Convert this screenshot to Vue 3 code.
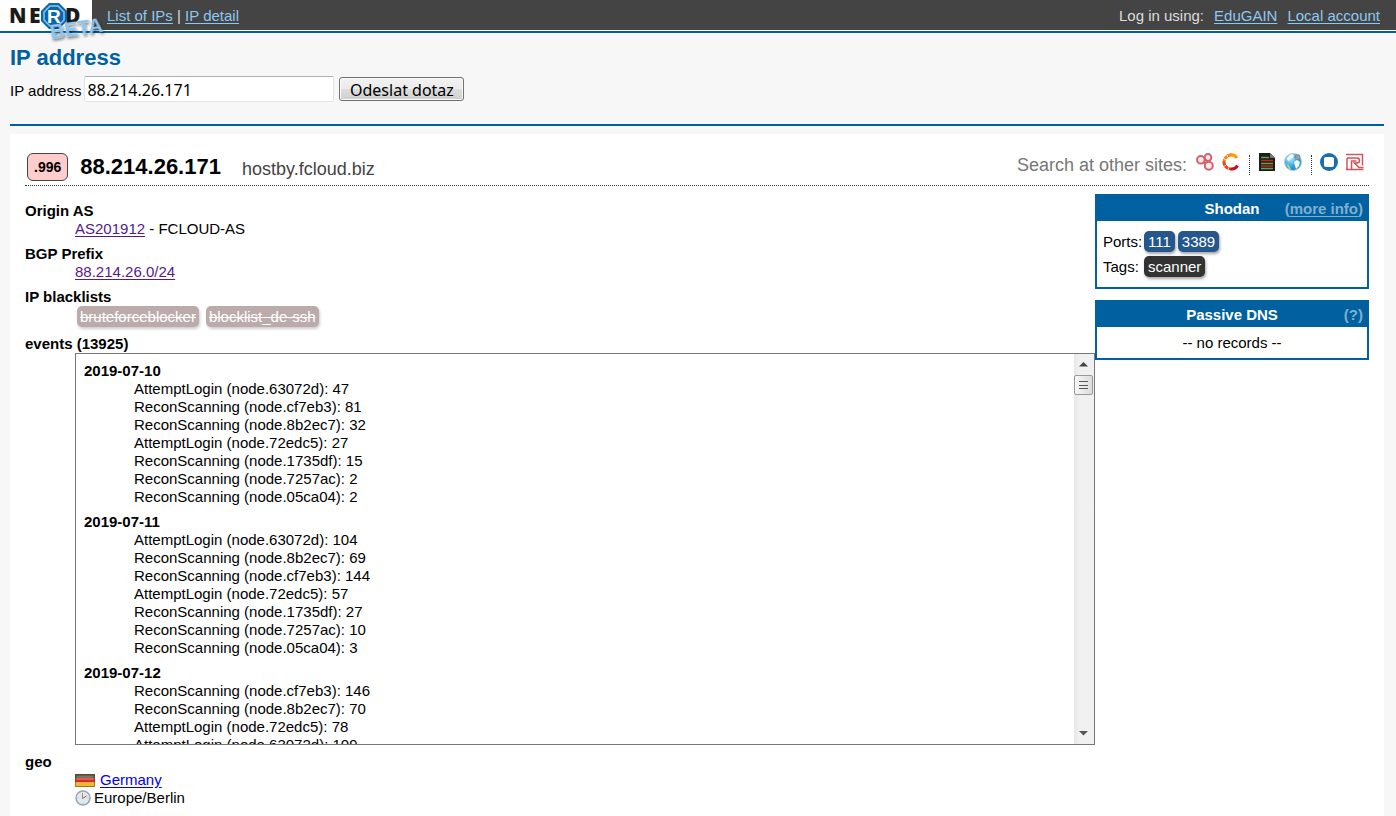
<script setup>
import { ref } from 'vue'

const address = ref('88.214.26.171')

const blacklists = ['bruteforceblocker', 'blocklist_de-ssh']
const ports = [111, 3389]

const days = [
  {
    date: '2019-07-10',
    events: [
      'AttemptLogin (node.63072d): 47',
      'ReconScanning (node.cf7eb3): 81',
      'ReconScanning (node.8b2ec7): 32',
      'AttemptLogin (node.72edc5): 27',
      'ReconScanning (node.1735df): 15',
      'ReconScanning (node.7257ac): 2',
      'ReconScanning (node.05ca04): 2',
    ],
  },
  {
    date: '2019-07-11',
    events: [
      'AttemptLogin (node.63072d): 104',
      'ReconScanning (node.8b2ec7): 69',
      'ReconScanning (node.cf7eb3): 144',
      'AttemptLogin (node.72edc5): 57',
      'ReconScanning (node.1735df): 27',
      'ReconScanning (node.7257ac): 10',
      'ReconScanning (node.05ca04): 3',
    ],
  },
  {
    date: '2019-07-12',
    events: [
      'ReconScanning (node.cf7eb3): 146',
      'ReconScanning (node.8b2ec7): 70',
      'AttemptLogin (node.72edc5): 78',
      'AttemptLogin (node.63072d): 109',
    ],
  },
]
</script>

<template>
  <div class="page">
    <header class="topbar">
      <a class="logo" href="#" aria-label="NERD beta">
        <svg width="108" height="48" viewBox="0 0 108 48">
          <defs>
            <filter id="soft" x="-20%" y="-40%" width="150%" height="200%">
              <feDropShadow dx="1" dy="2" stdDeviation="1.5" flood-color="#000" flood-opacity="0.6" />
            </filter>
          </defs>
          <g class="logo-word">
            <text x="9" y="23">N</text>
            <text x="29" y="23">E</text>
            <text x="65" y="23">D</text>
          </g>
          <path d="M49 3h10l8 8v10l-8 8H49l-8-8V11z" fill="#0b67ac" />
          <path d="M50 6h8l6 6v8l-6 6h-8l-6-6v-8z" fill="none" stroke="#8cc4ea" stroke-width="1.5" />
          <text class="logo-r" x="47" y="23">R</text>
          <text class="logo-beta" x="51" y="39" transform="rotate(-8 51 39)" filter="url(#soft)">BETA</text>
        </svg>
      </a>
      <nav class="menu"><a href="#">List of IPs</a> | <a href="#">IP detail</a></nav>
      <div class="login">
        <span>Log in using:</span>
        <a href="#">EduGAIN</a>
        <a href="#">Local account</a>
      </div>
    </header>

    <section class="query">
      <h1>IP address</h1>
      <form @submit.prevent>
        <label for="ip">IP address</label>
        <input id="ip" v-model="address" type="text" />
        <button type="submit">Odeslat dotaz</button>
      </form>
    </section>

    <main class="panel">
      <div class="title">
        <span class="score">.996</span>
        <h2>88.214.26.171</h2>
        <span class="host">hostby.fcloud.biz</span>
        <div class="sites">
          <span class="sites-label">Search at other sites:</span>
          <a href="#" aria-label="Site 1">
            <svg width="18" height="18" viewBox="0 0 18 18" fill="#fbeaec" stroke="#d4606b" stroke-width="2">
              <circle cx="12" cy="4.500" r="3.400" />
              <circle cx="4.800" cy="6.800" r="3.800" />
              <circle cx="12.800" cy="12.800" r="4" />
              <path d="M7.500 9.500l2.500 1.500M9 6l2 3" />
            </svg>
          </a>
          <a href="#" aria-label="Site 2">
            <svg width="18" height="18" viewBox="0 0 18 18" fill="none" stroke-width="3">
              <path d="M15 5A7 7 0 0 0 8 2" stroke="#ff9a00" />
              <path d="M9 2A7 7 0 0 0 2 9" stroke="#ff8010" stroke-dasharray="3.500 .6" />
              <path d="M2 8.500A7 7 0 0 0 9 16" stroke="#f0401c" stroke-dasharray="4 .6" />
              <path d="M8.500 16A7 7 0 0 0 15.500 12.500" stroke="#c8101c" />
            </svg>
          </a>
          <span class="divider"></span>
          <a href="#" aria-label="Site 3">
            <svg width="18" height="18" viewBox="0 0 18 18">
              <path d="M1 0h11l5 5v13H1z" fill="#1c1c1c" />
              <path d="M12 0v5h5z" fill="#777" />
              <path d="M3 4.500h8M3 10.500h12M3 15.500h12" stroke="#4cae4f" stroke-width="1.300" />
              <path d="M3 7.500h12M3 13h12" stroke="#e01818" stroke-width="1.300" />
            </svg>
          </a>
          <a href="#" aria-label="Site 4">
            <svg width="18" height="18" viewBox="0 0 18 18">
              <defs>
                <radialGradient id="globe" cx=".35" cy=".3" r=".8">
                  <stop offset="0" stop-color="#c6ecfb" />
                  <stop offset=".5" stop-color="#3fabe4" />
                  <stop offset="1" stop-color="#1673b8" />
                </radialGradient>
              </defs>
              <circle cx="9" cy="9" r="8.500" fill="url(#globe)" stroke="#a4cfe0" />
              <path d="M3 5l4-4 3 1-1 3-3 1-1 2-2-1zM10 9l3-2 3 2-1 4-3 3-1-3z" fill="#effaf4" />
              <path d="M2 11l3 1 2 4-2 0z" fill="#a3d79c" />
              <circle cx="13.500" cy="4" r="2.500" fill="#8fa1aa" stroke="#7b8c95" />
            </svg>
          </a>
          <span class="divider"></span>
          <a href="#" aria-label="Site 5">
            <svg width="18" height="18" viewBox="0 0 18 18">
              <circle cx="9" cy="9" r="9" fill="#1c6cb0" />
              <rect x="4" y="4" width="10" height="10" rx="2" fill="#fff" />
            </svg>
          </a>
          <a href="#" aria-label="Site 6">
            <svg width="18" height="18" viewBox="0 0 18 18" fill="none" stroke="#d4545e" stroke-width="1.500">
              <path d="M0 1.500h16.500v11M0 16.500h5.500V8h5M1 16V5" />
              <path d="M1 5h10q2.500 0 2.500 2.500T11 10H8.500l4.500 4.500h4.500M5.500 16.500h12" />
            </svg>
          </a>
        </div>
      </div>

      <div class="columns">
        <dl class="facts">
          <dt>Origin AS</dt>
          <dd><a class="visited" href="#">AS201912</a> - FCLOUD-AS</dd>
          <dt>BGP Prefix</dt>
          <dd><a class="visited" href="#">88.214.26.0/24</a></dd>
          <dt>IP blacklists</dt>
          <dd class="lists">
            <span v-for="name in blacklists" :key="name" class="tag old">{{ name }}</span>
          </dd>
          <dt>events (13925)</dt>
          <dd class="events">
            <div class="log">
              <dl v-for="day in days" :key="day.date">
                <dt>{{ day.date }}</dt>
                <dd v-for="line in day.events" :key="line">{{ line }}</dd>
              </dl>
            </div>
            <div class="scrollbar" aria-hidden="true">
              <svg width="19" height="20" viewBox="0 0 19 20"><path d="M5 12.500h9l-4.500-4.500z" fill="#444" /></svg>
              <span class="thumb"><i></i><i></i><i></i></span>
              <svg class="down" width="19" height="20" viewBox="0 0 19 20"><path d="M5 7h9l-4.500 4.500z" fill="#555" /></svg>
            </div>
          </dd>
          <dt class="place">geo</dt>
          <dd class="geo">
            <svg width="20" height="13" viewBox="0 0 20 13">
              <path d="M0 0h20v4.500H0z" fill="#47463c" />
              <path d="M0 4.500h20v4H0z" fill="#dc2a20" />
              <path d="M0 8.500h20V13H0z" fill="#eebb2b" />
              <path d="M1.500 1.500h17v3h-17z" fill="#77766a" />
              <path d="M1.500 4.500h17v1.500h-17z" fill="#ef5a4c" />
              <path d="M.5.5h19v12H.5z" fill="none" stroke="#6b4a1c" stroke-opacity=".6" />
            </svg>
            <a class="country" href="#">Germany</a>
          </dd>
          <dd class="geo zone">
            <svg width="16" height="16" viewBox="0 0 16 16" fill="none">
              <circle cx="8" cy="8" r="7" fill="#dfe9ee" stroke="#98a7b3" stroke-width="1.500" />
              <path d="M7.500 3v5" stroke="#c9775c" />
              <path d="M7.500 8.500L11.500 6" stroke="#5d6b75" />
              <path d="M8 13v1M2.500 8h1M12.500 8h1" stroke="#b3c0c8" />
            </svg>
            <span>Europe/Berlin</span>
          </dd>
        </dl>

        <aside>
          <section class="box">
            <header><h3>Shodan</h3><span class="more">(<a href="#">more info</a>)</span></header>
            <div class="shodan">
              <span>Ports:</span>
              <div class="tags"><span v-for="p in ports" :key="p" class="tag port">{{ p }}</span></div>
              <span>Tags:</span>
              <div class="tags"><span class="tag dark">scanner</span></div>
            </div>
          </section>
          <section class="box">
            <header><h3>Passive DNS</h3><span class="more">(?)</span></header>
            <p>-- no records --</p>
          </section>
        </aside>
      </div>
    </main>
  </div>
</template>

<style>
body {
  background: #f7f7f7;
}
</style>

<style scoped>
.page {
  height: 100vh;
  overflow: hidden;
  display: flex;
  flex-direction: column;
  font: 15px/18px "Liberation Sans", Arial, sans-serif;
  color: #000;
  background: #f7f7f7;
}
h1, h2, h3, p, dl, dd {
  margin: 0;
}
svg {
  display: block;
  flex: none;
}

.topbar {
  flex: none;
  display: flex;
  align-items: flex-start;
  height: 31px;
  padding-right: 16px;
  background: #444;
  color: #ddd;
  border-bottom: 2px solid #0060a0;
  box-shadow: inset 0 -1px #fff;
}
.topbar a {
  color: #8cc8f0;
  text-underline-offset: 2px;
}
.logo {
  width: 92px;
  height: 31px;
  background: #fff;
  position: relative;
  z-index: 1;
}
.logo-word {
  font: 800 21px "Open Sans", sans-serif;
  fill: #1b1b1b;
}
.logo-r {
  font: bold 19px "Liberation Sans", sans-serif;
  fill: #fff;
}
.logo-beta {
  font: bold 20px "Liberation Sans", sans-serif;
  fill: #8fc3ec;
}
.menu {
  margin-left: 15px;
  padding-top: 7px;
}
.login {
  margin-left: auto;
  padding-top: 7px;
  display: flex;
  gap: 10px;
}

.query {
  flex: none;
  margin: 0 12px 8px 10px;
  padding: 12px 0 22px;
  border-bottom: 2px solid #0060a0;
}
h1 {
  font-size: 22px;
  line-height: 26px;
  color: #0060a0;
}
.query form {
  display: flex;
  align-items: center;
  margin-top: 5px;
}
.query label {
  padding-top: 3px;
}
.query input {
  box-sizing: border-box;
  width: 250px;
  height: 26px;
  margin: 0 5px 0 3px;
  padding: 2px 2px 0;
  border: 1px solid #e2e3ea;
  border-top-color: #abadb3;
  border-radius: 2px;
  background: #fff;
  font: 16px "Noto Sans", sans-serif;
}
.query button {
  width: 125px;
  height: 24px;
  padding: 1px 0 0;
  border: 1px solid #707070;
  border-radius: 3px;
  background: linear-gradient(#f2f2f2, #ebebeb 50%, #dddddd 50%, #cfcfcf);
  box-shadow: inset 0 0 0 1px #fbfbfb;
  font: 16px/20px "Noto Sans", sans-serif;
  color: #000;
}

.panel {
  flex: 1;
  min-height: 0;
  margin: 0 12px 0 10px;
  padding: 16px 15px 0;
  background: #fff;
}
.title {
  display: flex;
  align-items: center;
  height: 35px;
  padding-left: 2px;
  border-bottom: 1px dotted #333;
}
.score {
  margin-bottom: 2px;
  padding: 4px 6px;
  border: 1px solid #444;
  border-radius: 6px;
  background: #fcc;
  font-weight: bold;
  font-size: 14px;
}
h2 {
  margin: 0 0 2px 12px;
  font-size: 22px;
  line-height: 26px;
}
.host {
  margin: 3px 0 0 21px;
  font-size: 18px;
  color: #444;
}
.sites {
  margin: 0 5px 12px auto;
  display: flex;
  align-items: center;
  gap: 8px;
}
.sites-label {
  padding: 6px 1px 0 0;
  font-size: 18px;
  color: #777;
}
.divider {
  height: 20px;
  margin: 6px 0 0 1px;
  border-left: 1px dotted #333;
}

.columns {
  display: grid;
  grid-template-columns: minmax(0, 1fr) 274px;
  align-items: start;
  padding-top: 8px;
}
.facts {
  padding-top: 1px;
}
dt {
  font-weight: bold;
  margin-top: 7px;
}
.place {
  margin-top: 8px;
}
dd {
  margin-left: 50px;
}
a {
  text-underline-offset: 2px;
}
.visited {
  color: #551a8b;
}
.country {
  color: #00e;
}
.lists {
  display: flex;
  gap: 7px;
  height: 22px;
  padding-left: 2px;
  box-sizing: border-box;
  align-items: flex-start;
}
.tag {
  padding: 2px 4px 1px;
  border-radius: 5px;
  color: #fff;
  box-shadow: 1px 2px 3px rgba(0, 0, 0, 0.35);
}
.old {
  padding: 2px 3px 1px;
  background: #bbabab;
  text-decoration: line-through;
  box-shadow: 1px 2px 3px rgba(0, 0, 0, 0.2);
}
.port {
  background: #25578c;
}
.dark {
  background: #333;
}
.events {
  display: flex;
  box-sizing: border-box;
  height: 392px;
  border: 1px solid #777;
}
.log {
  flex: 1;
  overflow-y: auto;
  scrollbar-width: none;
  padding: 1px 8px;
}
.scrollbar {
  display: flex;
  flex-direction: column;
  width: 20px;
  background: linear-gradient(90deg, #e8e8e8, #f0f0f0 30%, #f1f1f1);
}
.thumb {
  box-sizing: border-box;
  width: 19px;
  height: 20px;
  margin-top: 1px;
  padding: 5px 4px;
  display: flex;
  flex-direction: column;
  gap: 3px;
  border: 1px solid #999;
  border-radius: 2px;
  background: linear-gradient(90deg, #f7f7f7, #dcdcdc);
}
.thumb i {
  height: 1px;
  background: #555;
}
.down {
  margin-top: auto;
}
.geo {
  display: flex;
  align-items: center;
  gap: 5px;
}
.zone {
  gap: 3px;
}

aside {
  display: grid;
  gap: 11px;
}
.box {
  border: 2px solid #0060a0;
}
.box header {
  display: grid;
  grid-template-columns: 1fr auto 1fr;
  padding: 4px 4px 3px;
  background: #0060a0;
  color: #fff;
  font-weight: bold;
}
h3 {
  grid-column: 2;
  font-size: 15px;
  line-height: 18px;
}
.more {
  justify-self: end;
  color: #80b0d0;
}
.more a {
  color: #80b0d0;
}
.shodan {
  display: grid;
  grid-template-columns: 38px 1fr;
  gap: 4px 3px;
  align-items: center;
  padding: 10px 6px;
}
.tags {
  display: flex;
  gap: 3px;
}
.box p {
  padding: 7px 0 6px;
  text-align: center;
}
</style>
